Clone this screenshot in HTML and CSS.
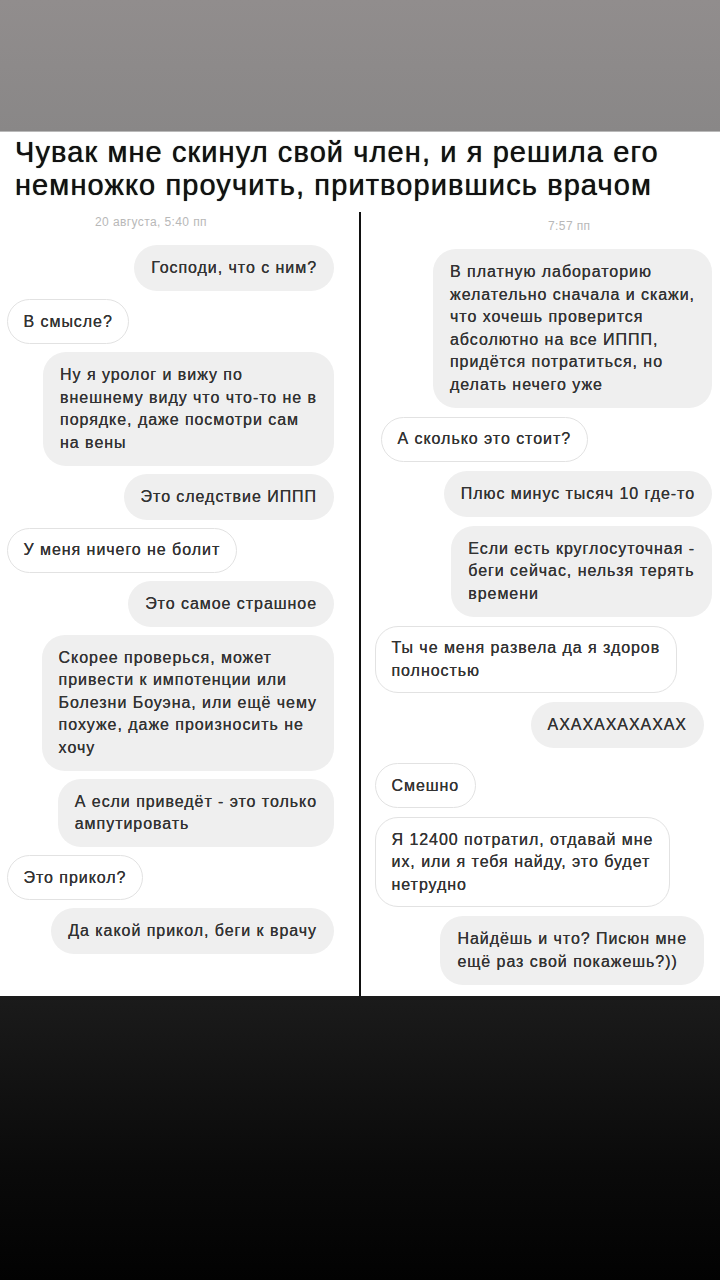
FILE: index.html
```html
<!DOCTYPE html>
<html lang="ru">
<head>
<meta charset="utf-8">
<link rel="stylesheet" href="styles.css">
</head>
<body>
<div class="top"></div>
<div class="panel">
  <h1 class="title">Чувак мне скинул свой член, и я решила его<br>немножко проучить, притворившись врачом</h1>
  <div class="chats">
    <div class="col col-left">
      <div class="stamp stamp-left">20 августа, 5:40 пп</div>
      <div class="msg mine">Господи, что с ним?</div>
      <div class="msg theirs">В смысле?</div>
      <div class="msg mine">Ну я уролог и вижу по<br>внешнему виду что что-то не в<br>порядке, даже посмотри сам<br>на вены</div>
      <div class="msg mine">Это следствие ИППП</div>
      <div class="msg theirs">У меня ничего не болит</div>
      <div class="msg mine">Это самое страшное</div>
      <div class="msg mine">Скорее проверься, может<br>привести к импотенции или<br>Болезни Боуэна, или ещё чему<br>похуже, даже произносить не<br>хочу</div>
      <div class="msg mine">А если приведёт - это только<br>ампутировать</div>
      <div class="msg theirs">Это прикол?</div>
      <div class="msg mine">Да какой прикол, беги к врачу</div>
    </div>
    <div class="divider"></div>
    <div class="col col-right">
      <div class="stamp stamp-right">7:57 пп</div>
      <div class="msg mine">В платную лабораторию<br>желательно сначала и скажи,<br>что хочешь проверится<br>абсолютно на все ИППП,<br>придётся потратиться, но<br>делать нечего уже</div>
      <div class="msg theirs theirs-in">А сколько это стоит?</div>
      <div class="msg mine">Плюс минус тысяч 10 где-то</div>
      <div class="msg mine">Если есть круглосуточная -<br>беги сейчас, нельзя терять<br>времени</div>
      <div class="msg theirs">Ты че меня развела да я здоров<br>полностью</div>
      <div class="msg mine mine-in">АХАХАХАХАХАХ</div>
      <div class="msg theirs gap-lg">Смешно</div>
      <div class="msg theirs">Я 12400 потратил, отдавай мне<br>их, или я тебя найду, это будет<br>нетрудно</div>
      <div class="msg mine mine-in">Найдёшь и что? Писюн мне<br>ещё раз свой покажешь?))</div>
    </div>
  </div>
</div>
<div class="bottom"></div>
</body>
</html>
```
FILE: styles.css
```css
* { box-sizing: border-box; }
html, body {
  margin: 0;
  padding: 0;
  width: 720px;
  height: 1280px;
  overflow: hidden;
  background: #000;
  font-family: "Liberation Sans", Arial, sans-serif;
}
.top {
  height: 132px;
  background: linear-gradient(#918d8d, #898787);
  border-bottom: 1px solid #b9b9b9;
}
.panel {
  height: 864px;
  background: #fff;
  display: flex;
  flex-direction: column;
}
.title {
  margin: 0;
  padding: 4px 0 0 15px;
  font-size: 29px;
  line-height: 33px;
  font-weight: normal;
  color: #111;
  letter-spacing: 1.1px;
  text-shadow: 0 0 0.7px #111;
}
.chats {
  flex: 1;
  margin-top: 10px;
  display: grid;
  grid-template-columns: 359px 2px 359px;
}
.divider {
  background: #111;
}
.col {
  display: flex;
  flex-direction: column;
}
.col-right { padding-top: 4px; }
.stamp {
  height: 20px;
  line-height: 20px;
  font-size: 12px;
  letter-spacing: 0.4px;
  color: #b8b8b8;
  margin-bottom: 13px;
}
.stamp-left { padding-left: 95px; }
.stamp-right { padding-left: 187px; }
.msg {
  width: fit-content;
  white-space: nowrap;
  font-size: 16px;
  line-height: 22.5px;
  letter-spacing: 0.95px;
  color: #333;
  text-shadow: 0 0 0.5px #333;
  padding: 12px 17px 11.5px;
  border-radius: 23px;
  margin-bottom: 8px;
}
.col-right .msg { margin-bottom: 9px; }
.mine {
  background: #efefef;
  align-self: flex-end;
}
.theirs {
  background: #fff;
  border: 1.5px solid #e2e2e2;
  padding: 10.5px 15.5px 10px;
  align-self: flex-start;
}
.col-left .mine { margin-right: 25px; }
.col-left .theirs { margin-left: 7px; }
.col-right .mine { margin-right: 8px; }
.col-right .mine-in { margin-right: 16px; }
.col-right .theirs { margin-left: 14px; }
.col-right .theirs-in { margin-left: 20px; }
.col-right .gap-lg { margin-top: 6px; }
.bottom {
  height: 284px;
  background: linear-gradient(#1b1b1b, #0a0a0a 60%, #020202);
}
```
